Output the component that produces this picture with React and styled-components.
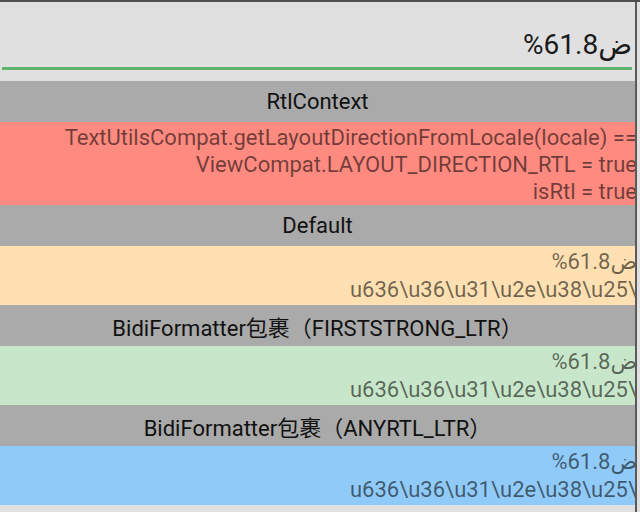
import React from 'react';
import styled, { createGlobalStyle } from 'styled-components';

const GlobalStyle = createGlobalStyle`
  html, body {
    margin: 0;
    padding: 0;
    background: #e0e0e0;
  }
  body {
    font-family: Roboto, "Noto Sans CJK SC", "DejaVu Sans", sans-serif;
  }
`;

const sections = [
  {
    title: 'RtlContext',
    color: '#ff8a80',
    lineHeight: 27,
    pad: [2, 0],
    lines: [
      'TextUtilsCompat.getLayoutDirectionFromLocale(locale) ==',
      'ViewCompat.LAYOUT_DIRECTION_RTL = true',
      'isRtl = true',
    ],
  },
  {
    title: 'Default',
    color: '#ffe0b2',
    lineHeight: 28,
    pad: [2, 1],
    lines: ['%61.8ض', 'u636\\u36\\u31\\u2e\\u38\\u25\\'],
  },
  {
    title: 'BidiFormatter包裹（FIRSTSTRONG_LTR）',
    color: '#c8e6c9',
    lineHeight: 28,
    pad: [2, 1],
    lines: ['%61.8ض', 'u636\\u36\\u31\\u2e\\u38\\u25\\'],
  },
  {
    title: 'BidiFormatter包裹（ANYRTL_LTR）',
    color: '#90caf9',
    lineHeight: 28,
    pad: [2, 1],
    lines: ['%61.8ض', 'u636\\u36\\u31\\u2e\\u38\\u25\\'],
  },
];

export default function App() {
  return (
    <>
      <GlobalStyle />
      <Frame>
        <Column>
          <InputArea>
            <Field>
              <Visual>%61.8ض</Visual>
            </Field>
          </InputArea>
          {sections.map((s) => (
            <React.Fragment key={s.title}>
              <Header>{s.title}</Header>
              <Band $bg={s.color} $lh={s.lineHeight} $pt={s.pad[0]} $pb={s.pad[1]}>
                {s.lines.map((line) => (
                  <Line key={line}>
                    <Visual>{line}</Visual>
                  </Line>
                ))}
              </Band>
            </React.Fragment>
          ))}
        </Column>
      </Frame>
    </>
  );
}

const Frame = styled.div`
  width: 640px;
  height: 512px;
  box-sizing: border-box;
  border-top: 2px solid #4f4f4f;
  background: #e0e0e0;
  display: flex;
  overflow: hidden;
`;

const Column = styled.div`
  flex: none;
  width: 635px;
  border-right: 2px solid #5a5a5a;
  display: flex;
  flex-direction: column;
  overflow: hidden;
`;

const InputArea = styled.div`
  height: 79px;
  flex: none;
  box-sizing: border-box;
  display: flex;
  flex-direction: column;
  justify-content: flex-end;
  padding: 0 3px 11px 2px;
`;

const Field = styled.div`
  font-size: 28px;
  line-height: 32px;
  color: #1a1a1a;
  text-align: right;
  padding-bottom: 6px;
  border-bottom: 3px solid #5fb36c;
`;

const Visual = styled.span`
  direction: ltr;
  unicode-bidi: bidi-override;
  white-space: nowrap;
`;

const Header = styled.div`
  height: 41px;
  flex: none;
  background: #aaaaaa;
  color: #111;
  font-size: 22px;
  display: flex;
  align-items: center;
  justify-content: center;
  white-space: nowrap;
`;

const Band = styled.div`
  flex: none;
  background: ${(p) => p.$bg};
  color: rgba(0, 0, 0, 0.56);
  font-size: 22px;
  line-height: ${(p) => p.$lh}px;
  padding: ${(p) => p.$pt}px 0 ${(p) => p.$pb}px;
  margin-right: -2px;
  text-align: right;
`;

const Line = styled.div`
  white-space: nowrap;
`;
